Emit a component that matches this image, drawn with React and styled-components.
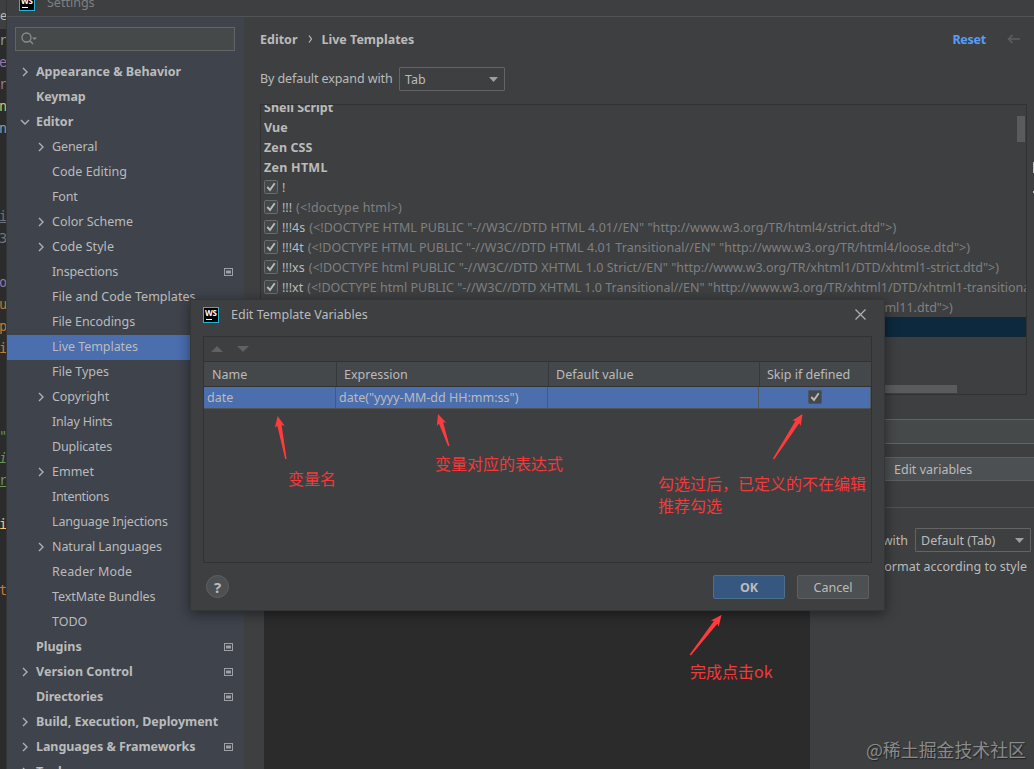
import React from 'react';
import styled, { createGlobalStyle } from 'styled-components';

const GlobalStyle = createGlobalStyle`
  * {
    box-sizing: border-box;
  }
  body {
    margin: 0;
    overflow: hidden;
    background: #3d3f41;
    color: #bbbbbb;
    font-family: "Noto Sans", "Noto Sans CJK SC", sans-serif;
    font-size: 12.5px;
  }
  svg {
    flex: none;
  }
`

const Screen = styled.div`
  position: relative;
  display: flex;
  width: 1034px;
  height: 769px;
  overflow: hidden;
  white-space: nowrap;
`

const CodeStrip = styled.div`
  width: 7px;
  flex: none;
  overflow: hidden;
  background: #2b2b2b;
  border-right: 1px solid #333638;
  font-family: "DejaVu Sans Mono", monospace;
  font-size: 13.5px;
`

const StripTab = styled.div`
  height: 29px;
  padding-top: 7px;
  background: #3d3f41;
  font-family: "Noto Sans", sans-serif;
  font-size: 12.5px;
  text-indent: -6px;
`

const CodeLine = styled.div`
  height: 22px;
  line-height: 22px;
  text-indent: -1px;
  color: ${props => props.$color || '#8f9aa7'};
  font-style: ${props => props.$italic ? 'italic' : 'normal'};
  text-decoration: ${props => props.$underline ? 'underline' : 'none'};
`

const SettingsWindow = styled.div`
  display: flex;
  flex-direction: column;
  flex: 1;
  min-width: 0;
`

const TitleBar = styled.div`
  display: flex;
  align-items: center;
  gap: 12px;
  height: 17px;
  padding: 0 0 11px 12px;
  border-bottom: 1px solid #505355;
  overflow: hidden;
  color: #808080;
`

const Body = styled.div`
  display: flex;
  flex: 1;
  min-height: 0;
`

const Sidebar = styled.div`
  width: 237px;
  flex: none;
  padding-top: 10px;
  overflow: hidden;
  background: #3e434c;
`

const SearchBox = styled.div`
  display: flex;
  align-items: center;
  width: 220px;
  height: 24px;
  margin: 0 0 9px 8px;
  padding-left: 5px;
  border: 1px solid #646464;
  background: #45494a;
`

const TreeRow = styled.div`
  display: flex;
  align-items: center;
  height: 25px;
  padding: 0 11px 2px ${props => props.$level ? 29 : 13}px;
  font-weight: ${props => props.$level ? 400 : 700};
  letter-spacing: ${props => props.$ls || 0}px;
  background: ${props => props.$selected ? '#4b6eaf' : 'transparent'};
`

const ChevronSlot = styled.div`
  display: flex;
  align-items: center;
  width: 16px;
  flex: none;
`

const ProjectMark = styled.svg`
  margin-left: auto;
`

const Main = styled.div`
  display: flex;
  flex-direction: column;
  flex: 1;
  min-width: 0;
  padding-left: 16px;
`

const Breadcrumb = styled.div`
  display: flex;
  align-items: center;
  height: 44px;
  font-weight: 700;
`

const Separator = styled.span`
  display: flex;
  justify-content: center;
  width: 24px;
  padding-left: 3px;
`

const ResetLink = styled.span`
  margin-left: auto;
  margin-right: 21px;
  color: #589df6;
  letter-spacing: -0.25px;
`

const BackArrow = styled.svg`
  margin-right: 14px;
`

const ExpandRow = styled.div`
  display: flex;
  align-items: center;
  height: 36px;
`

const ExpandLabel = styled.div`
  width: 139px;
  padding-bottom: 1px;
  letter-spacing: -0.09px;
`

const Select = styled.div`
  display: flex;
  align-items: center;
  justify-content: space-between;
  width: ${props => props.$width}px;
  height: 24px;
  flex: none;
  padding: 0 6px 0 5px;
  border: 1px solid #646464;
  border-radius: 1px;
`

const ListArea = styled.div`
  display: flex;
  height: 291px;
  margin-top: 7px;
`

const TemplateList = styled.div`
  position: relative;
  width: 767px;
  flex: none;
  border: 1px solid #323232;
  overflow: hidden;
`

const ListRows = styled.div`
  margin-top: -8px;
`

const ListRow = styled.div`
  display: flex;
  align-items: center;
  gap: 4px;
  height: 20px;
  padding-left: 3px;
  font-weight: ${props => props.$group ? 700 : 400};
  letter-spacing: ${props => props.$ls || 0}px;
  background: ${props => props.$selected ? '#0d293e' : 'transparent'};
`

const Description = styled.span`
  color: #808080;
  letter-spacing: ${props => props.$ls || 0}px;
`

const ScrollThumb = styled.div`
  position: absolute;
  right: 1px;
  top: 11px;
  width: 8px;
  height: 26px;
  background: #595b5d;
`

const HorizontalThumb = styled.div`
  position: absolute;
  left: 3px;
  bottom: 1px;
  width: 693px;
  height: 8px;
  background: #595b5d;
`

const SideButtons = styled.div`
  display: flex;
  flex-direction: column;
  align-items: flex-end;
  flex: 1;
  gap: 18px;
  padding-top: 58px;
`

const SideMark = styled.div`
  width: 1px;
  height: ${props => props.$height}px;
  background: #c0c0c0;
`

const DescriptionInput = styled.div`
  height: 25px;
  margin: 24px -10px 0 84px;
  flex: none;
  border: 1px solid #646464;
  background: #45494a;
`

const Details = styled.div`
  display: flex;
  flex: 1;
  min-height: 0;
  padding-left: 4px;
`

const TemplateText = styled.div`
  width: 546px;
  flex: none;
  margin-top: 13px;
  background: #2b2b2b;
`

const Options = styled.div`
  display: flex;
  flex-direction: column;
  flex: 1;
  min-width: 0;
  padding-top: 13px;
`

const EditVariables = styled.div`
  display: flex;
  align-items: center;
  height: 24px;
  margin: 0 -10px 0 40px;
  padding-left: 43px;
  border: 1px solid #5e6060;
  background: #4c5052;
`

const OptionsRule = styled.div`
  height: 1px;
  margin: 26px 0 20px 10px;
  background: #515355;
`

const OptionLine = styled.div`
  display: flex;
  align-items: center;
  justify-content: flex-end;
  gap: 7px;
  height: 24px;
  padding-right: ${props => props.$right}px;
  margin-bottom: 2px;
`

const Dialog = styled.div`
  position: absolute;
  left: 190px;
  top: 299px;
  display: flex;
  flex-direction: column;
  width: 695px;
  height: 312px;
  padding: 0 12px;
  border: 1px solid #343638;
  background: #3d3f41;
  box-shadow: 0 3px 12px rgba(0, 0, 0, 0.45);
`

const DialogTitle = styled.div`
  display: flex;
  align-items: center;
  gap: 12px;
  height: 36px;
  padding: 0 6px 6px 0;
`

const CloseIcon = styled.svg`
  margin-left: auto;
`

const VariablesPanel = styled.div`
  height: 228px;
  border: 1px solid #323232;
`

const PanelToolbar = styled.div`
  display: flex;
  align-items: center;
  gap: 14px;
  height: 25px;
  padding-left: 7px;
  border-bottom: 1px solid #323232;
`

const HeaderRow = styled.div`
  display: flex;
  height: 25px;
  padding-right: 1px;
  border-bottom: 1px solid #323232;
  background: #45484a;
`

const HeaderCell = styled.div`
  display: flex;
  align-items: center;
  width: ${props => props.$width}px;
  flex: none;
  height: 24px;
  padding: 2px 0 0 ${props => props.$pad}px;
  border-right: 1px solid ${props => props.$last ? 'transparent' : '#36393b'};
`

const ValueRow = styled.div`
  display: flex;
  height: 22px;
  margin-right: 1px;
  border-bottom: 1px solid #515355;
  background: #4b6eaf;
`

const ValueCell = styled.div`
  display: flex;
  align-items: center;
  justify-content: ${props => props.$center ? 'center' : 'flex-start'};
  width: ${props => props.$width}px;
  flex: none;
  padding-left: ${props => props.$center ? 0 : 3}px;
  border-right: 1px solid #515860;
`

const DialogFooter = styled.div`
  display: flex;
  align-items: center;
  gap: 12px;
  height: 47px;
  padding: 0 3px 0 3px;
`

const HelpButton = styled.div`
  display: flex;
  align-items: center;
  justify-content: center;
  width: 23px;
  height: 23px;
  margin-right: auto;
  border: 1px solid #5e6060;
  border-radius: 50%;
  background: #4c5052;
  font-size: 15px;
  font-weight: 700;
`

const Button = styled.div`
  display: flex;
  align-items: center;
  justify-content: center;
  width: 72px;
  height: 24px;
  padding-top: 1px;
  border: 1px solid ${props => props.$primary ? '#4c708c' : '#5e6060'};
  border-radius: 2px;
  background: ${props => props.$primary ? '#365880' : '#4c5052'};
  font-weight: ${props => props.$primary ? 700 : 400};
`

const Note = styled.div`
  position: absolute;
  left: ${props => props.$x}px;
  top: ${props => props.$y}px;
  color: #f5383a;
  font-family: "Noto Sans CJK SC", sans-serif;
  font-size: 16px;
  line-height: 22px;
`

const Arrows = styled.svg`
  position: absolute;
  left: 0;
  top: 0;
`

const Watermark = styled.div`
  position: absolute;
  right: 8px;
  bottom: 8px;
  color: #8a8b8c;
  font-family: "Noto Sans CJK SC", sans-serif;
  font-size: 17.9px;
  line-height: 24px;
  text-shadow: 1px 1px 1px #222222;
`

const codeLines = [
  { text: 'r' },
  { text: 'e', color: '#9876aa' },
  { text: 'r', color: '#9876aa' },
  { text: 'n', color: '#d8c15f' },
  { text: 'n' },
  {}, {}, {},
  { text: 'i', color: '#72737a', underline: true },
  { text: '3', color: '#72737a' },
  {},
  { text: 'o', color: '#9876aa' },
  { text: 'u', color: '#cc7832' },
  { text: 'p', color: '#cc7832' },
  { text: 'i', color: '#cc7832' },
  {}, {}, {},
  { text: '"', color: '#629755', italic: true },
  { text: 'i', color: '#629755', italic: true },
  { text: 'r', color: '#6a9759', underline: true },
  {},
  { text: 'i', color: '#ffc66d' },
  {}, {},
  { text: 't', color: '#cc7832' },
];

const tree = [
  { label: 'Appearance & Behavior', arrow: 'right', ls: -0.03 },
  { label: 'Keymap', ls: -0.1 },
  { label: 'Editor', arrow: 'down', ls: -0.05 },
  { label: 'General', level: 1, arrow: 'right', ls: -0.1 },
  { label: 'Code Editing', level: 1, ls: 0.05 },
  { label: 'Font', level: 1, ls: -0.2 },
  { label: 'Color Scheme', level: 1, arrow: 'right' },
  { label: 'Code Style', level: 1, arrow: 'right', ls: 0.05 },
  { label: 'Inspections', level: 1, mark: true, ls: -0.15 },
  { label: 'File and Code Templates', level: 1, ls: 0.04 },
  { label: 'File Encodings', level: 1, ls: -0.05 },
  { label: 'Live Templates', level: 1, selected: true, ls: -0.05 },
  { label: 'File Types', level: 1 },
  { label: 'Copyright', level: 1, arrow: 'right', ls: -0.05 },
  { label: 'Inlay Hints', level: 1, ls: -0.2 },
  { label: 'Duplicates', level: 1, ls: -0.15 },
  { label: 'Emmet', level: 1, arrow: 'right' },
  { label: 'Intentions', level: 1, ls: -0.35 },
  { label: 'Language Injections', level: 1, ls: -0.17 },
  { label: 'Natural Languages', level: 1, arrow: 'right', ls: -0.1 },
  { label: 'Reader Mode', level: 1, ls: 0.15 },
  { label: 'TextMate Bundles', level: 1, ls: -0.08 },
  { label: 'TODO', level: 1 },
  { label: 'Plugins', mark: true },
  { label: 'Version Control', arrow: 'right', mark: true, ls: 0.03 },
  { label: 'Directories', mark: true, ls: -0.12 },
  { label: 'Build, Execution, Deployment', arrow: 'right', ls: -0.02 },
  { label: 'Languages & Frameworks', arrow: 'right', mark: true, ls: -0.06 },
  { label: 'Tools', arrow: 'right' },
];

const groups = [
  { name: 'Shell Script' },
  { name: 'Vue' },
  { name: 'Zen CSS', ls: 0.1 },
  { name: 'Zen HTML', ls: 0.25 },
];

const templates = [
  { key: '!', description: '' },
  { key: '!!!', description: '(<!doctype html>)', ls: 0.2 },
  { key: '!!!4s', description: '(<!DOCTYPE HTML PUBLIC "-//W3C//DTD HTML 4.01//EN" "http://www.w3.org/TR/html4/strict.dtd">)', ls: 0.05 },
  { key: '!!!4t', description: '(<!DOCTYPE HTML PUBLIC "-//W3C//DTD HTML 4.01 Transitional//EN" "http://www.w3.org/TR/html4/loose.dtd">)', ls: 0.06 },
  { key: '!!!xs', description: '(<!DOCTYPE html PUBLIC "-//W3C//DTD XHTML 1.0 Strict//EN" "http://www.w3.org/TR/xhtml1/DTD/xhtml1-strict.dtd">)' },
  { key: '!!!xt', description: '(<!DOCTYPE html PUBLIC "-//W3C//DTD XHTML 1.0 Transitional//EN" "http://www.w3.org/TR/xhtml1/DTD/xhtml1-transitional.dtd">)' },
  { key: '!!!xxs', description: '(<!DOCTYPE html PUBLIC "-//W3C//DTD XHTML 1.1//EN" "http://www.w3.org/TR/xhtml11/DTD/xhtml11.dtd">)' },
];

const arrows = [
  { tip: [277.7, 416], tail: [285.9, 459] },
  { tip: [438, 414], tail: [448.8, 446] },
  { tip: [802.5, 414], tail: [773.5, 459] },
  { tip: [721.5, 615], tail: [690.3, 655] },
];

// Tapered arrow: wide head at the tip, thin at the tail
const getArrowPoints = ({ tip, tail }) => {
  const dx = tail[0] - tip[0];
  const dy = tail[1] - tip[1];
  const length = Math.hypot(dx, dy);
  const at = (along, side) => {
    const x = tip[0] + (dx * along - dy * side) / length;
    const y = tip[1] + (dy * along + dx * side) / length;
    return `${x.toFixed(1)},${y.toFixed(1)}`
  }

  return [at(0, 0), at(11, 5), at(9.5, 2.2), at(length, 0.7), at(length, -0.7), at(9.5, -2.2), at(11, -5)].join(' ');
}

function Chevron({ direction }) {
  return (
    <svg width="10" height="10" viewBox="0 0 10 10" fill="none" stroke="#afb1b3" strokeWidth="1.4">
      <path d={direction === 'down' ? 'M1 3l4 4 4-4' : 'M3 1l4 4-4 4'} />
    </svg>
  );
}

function Triangle({ up, color = '#9da0a2', width = 9, height = 5 }) {
  return (
    <svg width={width} height={height} viewBox="0 0 10 5" preserveAspectRatio="none" fill={color}>
      <path d={up ? 'M0 5h10L5 0z' : 'M0 0h10L5 5z'} />
    </svg>
  );
}

function Check({ boxed = true }) {
  return (
    <svg width="14" height="14" viewBox="0 0 14 14" fill="none">
      <rect x="0.5" y="0.5" width="13" height="13" rx="1" fill="#43494a" stroke={boxed ? '#6b6b6b' : '#4e545a'} />
      <path d="M3.3 7l2.7 3L10.7 3.3" stroke="#bbbbbb" strokeWidth="1.9" />
    </svg>
  );
}

const LogoBox = styled.div`
  display: flex;
  flex-direction: column;
  width: 16px;
  height: 16px;
  flex: none;
  padding: 1px 0 0 1px;
  border: 1px solid #22b4d6;
  background: #000000;
  color: #ffffff;
  font-size: 8px;
  font-weight: 700;
  line-height: 8px;
  letter-spacing: -0.3px;
`

const LogoBar = styled.div`
  width: 6px;
  height: 1px;
  margin: 2px 0 0 1px;
  background: #ffffff;
`

function Logo() {
  return (
    <LogoBox>
      WS
      <LogoBar />
    </LogoBox>
  );
}

function App() {
  return (
    <Screen>
      <GlobalStyle />
      <CodeStrip>
        <StripTab>se</StripTab>
        {codeLines.map((line, index) => (
          <CodeLine key={index} $color={line.color} $italic={line.italic} $underline={line.underline}>
            {line.text}
          </CodeLine>
        ))}
      </CodeStrip>
      <SettingsWindow>
        <TitleBar>
          <Logo />
          Settings
        </TitleBar>
        <Body>
          <Sidebar>
            <SearchBox>
              <svg width="18" height="16" viewBox="0 0 18 16" fill="none" stroke="#8a8d8e" strokeWidth="1.3">
                <circle cx="5.5" cy="6.5" r="4.5" />
                <path d="M8.8 9.8L12 13" />
                <path d="M11 6.5h5l-2.5 2.5z" fill="#8a8d8e" stroke="none" />
              </svg>
            </SearchBox>
            {tree.map(item => (
              <TreeRow key={item.label} $level={item.level} $selected={item.selected} $ls={item.ls}>
                <ChevronSlot>
                  {item.arrow && <Chevron direction={item.arrow} />}
                </ChevronSlot>
                {item.label}
                {item.mark && (
                  <ProjectMark width="9" height="8" viewBox="0 0 9 8">
                    <rect x="0.5" y="0.5" width="8" height="7" fill="none" stroke="#9da0a4" />
                    <rect x="2" y="2.5" width="5" height="3" fill="#9da0a4" />
                  </ProjectMark>
                )}
              </TreeRow>
            ))}
          </Sidebar>
          <Main>
            <Breadcrumb>
              Editor
              <Separator>
                <svg width="5" height="8" viewBox="0 0 5 8" fill="none" stroke="#bbbbbb" strokeWidth="1.2">
                  <path d="M1 0.5L3.5 4 1 7.5" />
                </svg>
              </Separator>
              Live Templates
              <ResetLink>Reset</ResetLink>
              <BackArrow width="13" height="10" viewBox="0 0 13 10" fill="none" stroke="#5c5f61" strokeWidth="1.6">
                <path d="M13 5H1.5M5.5 1l-4 4 4 4" />
              </BackArrow>
            </Breadcrumb>
            <ExpandRow>
              <ExpandLabel>By default expand with</ExpandLabel>
              <Select $width={106}>
                Tab
                <Triangle />
              </Select>
            </ExpandRow>
            <ListArea>
              <TemplateList>
                <ListRows>
                  {groups.map(group => <ListRow key={group.name} $group $ls={group.ls}>{group.name}</ListRow>)}
                  {templates.map(item => (
                    <ListRow key={item.key}>
                      <Check />
                      {item.key}
                      <Description $ls={item.ls}>{item.description}</Description>
                    </ListRow>
                  ))}
                  <ListRow $selected />
                </ListRows>
                <ScrollThumb />
                <HorizontalThumb />
              </TemplateList>
              <SideButtons>
                <SideMark $height={11} />
                <SideMark $height={2} />
              </SideButtons>
            </ListArea>
            <DescriptionInput />
            <Details>
              <TemplateText />
              <Options>
                <EditVariables>Edit variables</EditVariables>
                <OptionsRule />
                <OptionLine $right={3}>
                  Expand with
                  <Select $width={116}>
                    Default (Tab)
                    <Triangle />
                  </Select>
                </OptionLine>
                <OptionLine $right={7}>Reformat according to style</OptionLine>
              </Options>
            </Details>
          </Main>
        </Body>
      </SettingsWindow>
      <Dialog>
        <DialogTitle>
          <Logo />
          Edit Template Variables
          <CloseIcon width="11" height="11" viewBox="0 0 11 11" stroke="#b0b2b3" strokeWidth="1.2">
            <path d="M0.5 0.5l10 10M10.5 0.5l-10 10" />
          </CloseIcon>
        </DialogTitle>
        <VariablesPanel>
          <PanelToolbar>
            <Triangle up color="#5f6264" width={12} height={6} />
            <Triangle color="#5f6264" width={12} height={6} />
          </PanelToolbar>
          <HeaderRow>
            <HeaderCell $width={133} $pad={8}>Name</HeaderCell>
            <HeaderCell $width={212} $pad={7}>Expression</HeaderCell>
            <HeaderCell $width={211} $pad={7}>Default value</HeaderCell>
            <HeaderCell $width={111} $pad={7} $last>Skip if defined</HeaderCell>
          </HeaderRow>
          <ValueRow>
            <ValueCell $width={132}>date</ValueCell>
            <ValueCell $width={212}>date("yyyy-MM-dd HH:mm:ss")</ValueCell>
            <ValueCell $width={211} />
            <ValueCell $width={112} $center><Check boxed={false} /></ValueCell>
          </ValueRow>
        </VariablesPanel>
        <DialogFooter>
          <HelpButton>?</HelpButton>
          <Button $primary>OK</Button>
          <Button>Cancel</Button>
        </DialogFooter>
      </Dialog>
      <Note $x={288} $y={467}>变量名</Note>
      <Note $x={435} $y={452}>变量对应的表达式</Note>
      <Note $x={658} $y={472}>勾选过后，已定义的不在编辑<br />推荐勾选</Note>
      <Note $x={690} $y={660}>完成点击ok</Note>
      <Arrows width="1034" height="769" fill="#ff3b3b">
        {arrows.map(arrow => <polygon key={arrow.tip[0]} points={getArrowPoints(arrow)} />)}
      </Arrows>
      <Watermark>@稀土掘金技术社区</Watermark>
    </Screen>
  );
}

export default App;
